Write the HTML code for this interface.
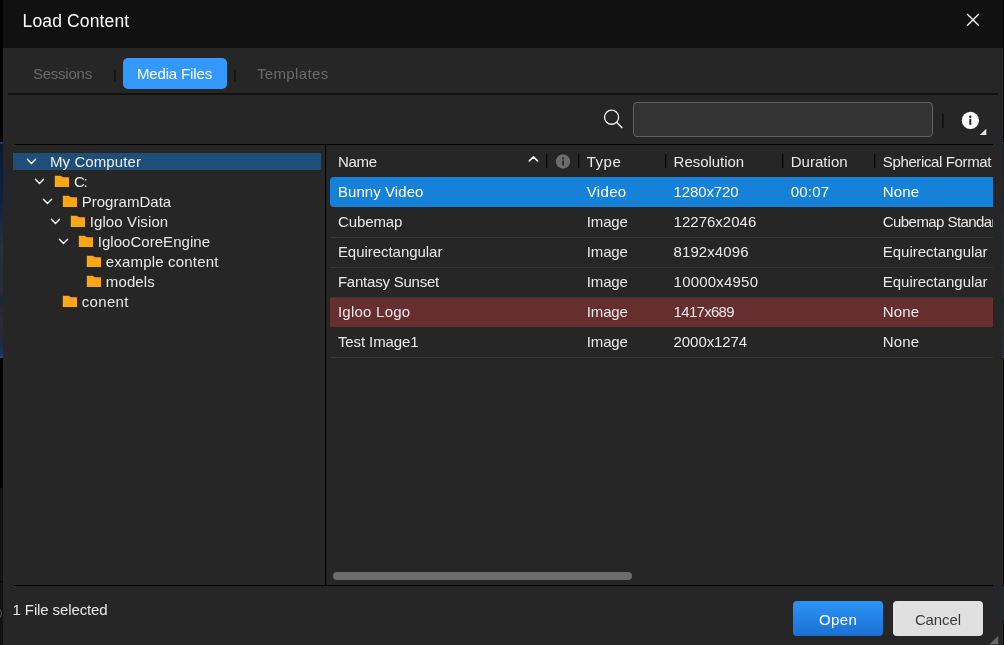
<!DOCTYPE html>
<html><head><meta charset="utf-8"><title>Load Content</title>
<style>
*{box-sizing:border-box;margin:0;padding:0}
html,body{width:1004px;height:645px;overflow:hidden;background:#000;font-family:"Liberation Sans",sans-serif;}
body{position:relative}
.abs{position:absolute}
#bgl1{left:0;top:0;width:3px;height:142px;background:#000}
#bgl2{left:0;top:142px;width:3px;height:216px;background:linear-gradient(#17375c 0,#17375c 2px,#0a1a33 2px,#0d2340 58px,#27333b 108px,#232c3a 133px,#2f2c35 148px,#1a2438 158px,#2f2a33 178px,#1e2a40 203px,#14365c 212px,#1c4a78 215px)}
#bgl3{left:0;top:358px;width:3px;height:130px;background:#000}
#bgl4{left:0;top:488px;width:3px;height:157px;background:#111}
#win{left:3px;top:0;width:1000px;height:645px;background:#262626}
#title{left:3px;top:0;width:1000px;height:48px;background:#111}
.t{color:#e6e6e6;font-size:15px;white-space:nowrap;position:absolute;line-height:normal}
.hl{position:absolute;background:#111;height:2px}
.vl{position:absolute;background:#111;width:2px}
.sep{position:absolute;background:#060606;width:1px;height:14px;top:154px;box-shadow:1px 0 0 rgba(0,0,0,.25)}
.rl{position:absolute;left:330px;width:663px;height:1px;background:#353535}
.ch{position:absolute;width:12px;height:8px;margin-left:-1px;margin-top:-1px}
.fo{position:absolute;width:16px;height:13px;margin-left:-1px;margin-top:-1px}
</style></head><body>
<div class="abs" id="bgl1"></div><div class="abs" id="bgl2"></div><div class="abs" id="bgl3"></div><div class="abs" id="bgl4"></div>
<div class="abs" style="left:1003px;top:0;width:1px;height:142px;background:#000"></div><div class="abs" style="left:1003px;top:142px;width:1px;height:216px;background:linear-gradient(#17375c 0,#17375c 2px,#0a1a33 2px,#0d2340 58px,#27333b 108px,#232c3a 133px,#2f2c35 148px,#1a2438 158px,#2f2a33 178px,#1e2a40 203px,#14365c 212px,#1c4a78 215px)"></div><div class="abs" style="left:1003px;top:358px;width:1px;height:287px;background:#0a0a0a"></div><div class="abs" style="left:1003px;top:587px;width:1px;height:33px;background:#0f2b4a"></div>
<div class="abs" style="left:0;top:581px;width:3px;height:1px;background:#060606"></div><div class="abs" style="left:-8px;top:608px;width:10px;height:11px;border:1px solid #555;border-radius:50%"></div>
<div class="abs" id="win"></div>
<div class="abs" id="title"></div>
<svg class="abs" style="left:965px;top:12px" width="16" height="16" viewBox="0 0 16 16"><path d="M2.1 2L13.9 13.8M13.9 2L2.1 13.8" stroke="#fff" stroke-width="1.3" fill="none"/></svg>

<!-- tabs -->
<div class="vl" style="left:114px;top:69px;height:12px;width:2px;background:#171717"></div>
<div class="abs" style="left:123px;top:58px;width:104px;height:31px;background:#3399ff;border-radius:5px"></div>
<div class="vl" style="left:234px;top:69px;height:12px;width:2px;background:#171717"></div>
<div class="hl" style="left:8px;top:93px;width:990px"></div>

<!-- search -->
<svg class="abs" style="left:600px;top:105px" width="26" height="26" viewBox="0 0 26 26"><circle cx="11.6" cy="12.2" r="7.05" stroke="#f4f4f4" stroke-width="1.3" fill="none"/><path d="M16.6 17.2L22.3 22.9" stroke="#f4f4f4" stroke-width="1.4"/></svg>
<div class="abs" style="left:633px;top:102px;width:300px;height:35px;background:#333;border:1px solid #636363;border-radius:4px"></div>
<div class="vl" style="left:942px;top:114px;height:14px;width:2px;background:#131313"></div>
<svg class="abs" style="left:960px;top:110px" width="28" height="27" viewBox="0 0 28 27"><circle cx="10.4" cy="10.4" r="8.6" fill="#fff"/><rect x="9.3" y="8.8" width="2" height="6" fill="#222"/><circle cx="10.3" cy="6.8" r="1.2" fill="#222"/><path d="M26.3 18.7V25H19.8Z" fill="#e4e4e4"/></svg>
<div class="hl" style="left:14px;top:144px;width:979px;height:1px;background:#000"></div>

<!-- tree -->
<div class="abs" style="left:13px;top:153px;width:308px;height:17px;background:#1f4e79"></div>
<svg class="ch" style="left:27px;top:159px"><path d="M1.4 1.3L5.5 5.4L9.6 1.3" stroke="#fff" stroke-width="1.4" fill="none" stroke-linecap="round" stroke-linejoin="round"/></svg>
<svg class="ch" style="left:35px;top:179px"><path d="M1.4 1.3L5.5 5.4L9.6 1.3" stroke="#fff" stroke-width="1.4" fill="none" stroke-linecap="round" stroke-linejoin="round"/></svg>
<svg class="ch" style="left:43px;top:199px"><path d="M1.4 1.3L5.5 5.4L9.6 1.3" stroke="#fff" stroke-width="1.4" fill="none" stroke-linecap="round" stroke-linejoin="round"/></svg>
<svg class="ch" style="left:51px;top:219px"><path d="M1.4 1.3L5.5 5.4L9.6 1.3" stroke="#fff" stroke-width="1.4" fill="none" stroke-linecap="round" stroke-linejoin="round"/></svg>
<svg class="ch" style="left:59px;top:239px"><path d="M1.4 1.3L5.5 5.4L9.6 1.3" stroke="#fff" stroke-width="1.4" fill="none" stroke-linecap="round" stroke-linejoin="round"/></svg>
<svg class="fo" style="left:55px;top:176px"><path d="M0.8 1.3Q0.8 0.8 1.3 0.8H6.7L8.8 2.3H14.5Q15 2.3 15 2.8V12H0.8Z" fill="#fda616"/></svg>
<svg class="fo" style="left:63px;top:196px"><path d="M0.8 1.3Q0.8 0.8 1.3 0.8H6.7L8.8 2.3H14.5Q15 2.3 15 2.8V12H0.8Z" fill="#fda616"/></svg>
<svg class="fo" style="left:71px;top:216px"><path d="M0.8 1.3Q0.8 0.8 1.3 0.8H6.7L8.8 2.3H14.5Q15 2.3 15 2.8V12H0.8Z" fill="#fda616"/></svg>
<svg class="fo" style="left:79px;top:236px"><path d="M0.8 1.3Q0.8 0.8 1.3 0.8H6.7L8.8 2.3H14.5Q15 2.3 15 2.8V12H0.8Z" fill="#fda616"/></svg>
<svg class="fo" style="left:87px;top:256px"><path d="M0.8 1.3Q0.8 0.8 1.3 0.8H6.7L8.8 2.3H14.5Q15 2.3 15 2.8V12H0.8Z" fill="#fda616"/></svg>
<svg class="fo" style="left:87px;top:276px"><path d="M0.8 1.3Q0.8 0.8 1.3 0.8H6.7L8.8 2.3H14.5Q15 2.3 15 2.8V12H0.8Z" fill="#fda616"/></svg>
<svg class="fo" style="left:63px;top:296px"><path d="M0.8 1.3Q0.8 0.8 1.3 0.8H6.7L8.8 2.3H14.5Q15 2.3 15 2.8V12H0.8Z" fill="#fda616"/></svg>
<div class="vl" style="left:325px;top:145px;height:440px;width:1px;background:#000;box-shadow:1px 0 0 rgba(0,0,0,.2)"></div>

<!-- table -->
<svg class="abs" style="left:528px;top:154px" width="12" height="9"><path d="M1.3 6.9L5.45 2.9L9.6 6.9" stroke="#fff" stroke-width="1.6" fill="none" stroke-linecap="round" stroke-linejoin="round"/></svg>
<div class="sep" style="left:546px"></div>
<svg class="abs" style="left:555px;top:154px" width="16" height="16" viewBox="0 0 16 16"><circle cx="8" cy="7.5" r="7.2" fill="#6c6c6c"/><rect x="7.2" y="6.5" width="1.7" height="5" fill="#262626"/><circle cx="8.05" cy="4.4" r="1.05" fill="#262626"/></svg>
<div class="sep" style="left:578px"></div>
<div class="sep" style="left:665px"></div>
<div class="sep" style="left:782px"></div>
<div class="sep" style="left:874px"></div>
<div class="abs" style="left:330px;top:177px;width:663px;height:30px;background:#1581d8;border-radius:4px 0 0 4px"></div>
<div class="rl" style="top:237px"></div>
<div class="rl" style="top:267px"></div>
<div class="rl" style="top:297px"></div>
<div class="abs" style="left:330px;top:298px;width:663px;height:29px;background:#662e2e"></div>
<div class="rl" style="top:357px"></div>

<!-- scrollbar -->
<div class="abs" style="left:333px;top:572px;width:298.5px;height:8px;border-radius:4px;background:#6c6c6c"></div>
<div class="hl" style="left:14px;top:585px;width:979px;height:1px;background:#000"></div>

<!-- footer -->
<div class="abs" style="left:793px;top:601px;width:90px;height:35px;border-radius:4px;background:linear-gradient(#2c93f6,#1a70d2)"></div>
<div class="abs" style="left:893px;top:601px;width:90px;height:35px;border-radius:4px;background:#e0e0e0"></div>
<svg class="abs" style="left:989px;top:635px" width="10" height="10" viewBox="0 0 10 10"><path d="M9.3 0.7V9.3H0.7Z" fill="#686868"/></svg>
<div id="tx" style="position:absolute;left:0;top:0;width:1004px;height:645px;will-change:transform">
<span class="t" style="left:22.6px;top:11.2px;font-size:17.5px;color:#fff;letter-spacing:0.14px;">Load Content</span>
<span class="t" style="left:32.9px;top:65.4px;font-size:15px;color:#6b6b6b;letter-spacing:-0.23px;">Sessions</span>
<span class="t" style="left:136.9px;top:65.4px;font-size:15px;color:#fff;letter-spacing:-0.14px;">Media Files</span>
<span class="t" style="left:256.9px;top:65.4px;font-size:15px;color:#6b6b6b;letter-spacing:0.37px;">Templates</span>
<span class="t" style="left:50.0px;top:153.4px;font-size:15px;color:#f0f0f0;letter-spacing:0.09px;">My Computer</span>
<span class="t" style="left:73.9px;top:173.4px;font-size:15px;color:#e9e9e9;letter-spacing:-1.20px;">C:</span>
<span class="t" style="left:81.7px;top:193.4px;font-size:15px;color:#e9e9e9;letter-spacing:0.03px;">ProgramData</span>
<span class="t" style="left:89.7px;top:213.4px;font-size:15px;color:#e9e9e9;letter-spacing:0.11px;">Igloo Vision</span>
<span class="t" style="left:97.7px;top:233.4px;font-size:15px;color:#e9e9e9;letter-spacing:0.04px;">IglooCoreEngine</span>
<span class="t" style="left:105.8px;top:253.4px;font-size:15px;color:#e9e9e9;letter-spacing:0.18px;">example content</span>
<span class="t" style="left:105.8px;top:273.4px;font-size:15px;color:#e9e9e9;letter-spacing:0.13px;">models</span>
<span class="t" style="left:81.7px;top:293.4px;font-size:15px;color:#e9e9e9;letter-spacing:0.35px;">conent</span>
<span class="t" style="left:337.9px;top:153.4px;font-size:15px;color:#e9e9e9;letter-spacing:-0.31px;">Name</span>
<span class="t" style="left:586.8px;top:153.4px;font-size:15px;color:#e9e9e9;letter-spacing:0.49px;">Type</span>
<span class="t" style="left:673.6px;top:153.4px;font-size:15px;color:#e9e9e9;letter-spacing:-0.04px;">Resolution</span>
<span class="t" style="left:790.7px;top:153.4px;font-size:15px;color:#e9e9e9;letter-spacing:0.04px;">Duration</span>
<span class="t" style="left:337.9px;top:183.4px;font-size:15px;color:#fff;letter-spacing:0.07px;">Bunny Video</span>
<span class="t" style="left:337.9px;top:213.4px;font-size:15px;color:#e9e9e9;letter-spacing:-0.09px;">Cubemap</span>
<span class="t" style="left:337.9px;top:243.4px;font-size:15px;color:#e9e9e9;letter-spacing:-0.04px;">Equirectangular</span>
<span class="t" style="left:337.9px;top:273.4px;font-size:15px;color:#e9e9e9;letter-spacing:-0.22px;">Fantasy Sunset</span>
<span class="t" style="left:337.9px;top:303.4px;font-size:15px;color:#e9e9e9;letter-spacing:0.25px;">Igloo Logo</span>
<span class="t" style="left:337.9px;top:333.4px;font-size:15px;color:#e9e9e9;letter-spacing:-0.10px;">Test Image1</span>
<span class="t" style="left:586.8px;top:183.4px;font-size:15px;color:#fff;letter-spacing:0.33px;">Video</span>
<span class="t" style="left:586.8px;top:213.4px;font-size:15px;color:#e9e9e9;letter-spacing:-0.15px;">Image</span>
<span class="t" style="left:586.8px;top:243.4px;font-size:15px;color:#e9e9e9;letter-spacing:-0.15px;">Image</span>
<span class="t" style="left:586.8px;top:273.4px;font-size:15px;color:#e9e9e9;letter-spacing:-0.15px;">Image</span>
<span class="t" style="left:586.8px;top:303.4px;font-size:15px;color:#e9e9e9;letter-spacing:-0.15px;">Image</span>
<span class="t" style="left:586.8px;top:333.4px;font-size:15px;color:#e9e9e9;letter-spacing:-0.15px;">Image</span>
<span class="t" style="left:673.6px;top:183.4px;font-size:15px;color:#fff;letter-spacing:-0.12px;">1280x720</span>
<span class="t" style="left:673.6px;top:213.4px;font-size:15px;color:#e9e9e9;letter-spacing:0.01px;">12276x2046</span>
<span class="t" style="left:673.6px;top:243.4px;font-size:15px;color:#e9e9e9;letter-spacing:0.08px;">8192x4096</span>
<span class="t" style="left:673.6px;top:273.4px;font-size:15px;color:#e9e9e9;letter-spacing:0.20px;">10000x4950</span>
<span class="t" style="left:673.6px;top:303.4px;font-size:15px;color:#e9e9e9;letter-spacing:-0.70px;">1417x689</span>
<span class="t" style="left:673.6px;top:333.4px;font-size:15px;color:#e9e9e9;letter-spacing:-0.08px;">2000x1274</span>
<span class="t" style="left:790.7px;top:183.4px;font-size:15px;color:#fff;letter-spacing:0.24px;">00:07</span>
<span class="t" style="left:882.8px;top:183.4px;font-size:15px;color:#fff;letter-spacing:0.18px;">None</span>
<span class="t" style="left:882.8px;top:243.4px;font-size:15px;color:#e9e9e9;letter-spacing:-0.02px;">Equirectangular</span>
<span class="t" style="left:882.8px;top:273.4px;font-size:15px;color:#e9e9e9;letter-spacing:-0.02px;">Equirectangular</span>
<span class="t" style="left:882.8px;top:303.4px;font-size:15px;color:#e9e9e9;letter-spacing:0.18px;">None</span>
<span class="t" style="left:882.8px;top:333.4px;font-size:15px;color:#e9e9e9;letter-spacing:0.18px;">None</span>
<span class="t" style="left:12.6px;top:601.4px;font-size:15px;color:#e9e9e9;letter-spacing:-0.12px;">1 File selected</span>
<span class="t" style="left:818.9px;top:610.8px;font-size:15px;color:#fff;letter-spacing:0.43px;">Open</span>
<span class="t" style="left:914.9px;top:610.8px;font-size:15px;color:#3c3c3c;letter-spacing:-0.12px;">Cancel</span>
<div class="abs" style="left:882.8px;top:151.4px;width:110.2px;height:22px;overflow:hidden"><span class="t" style="left:0;top:2px;color:#e9e9e9;letter-spacing:-0.37px">Spherical Format</span></div>
<div class="abs" style="left:882.8px;top:211.4px;width:110.2px;height:22px;overflow:hidden"><span class="t" style="left:0;top:2px;color:#e9e9e9;letter-spacing:-0.57px">Cubemap Standard</span></div>
</div>
</body></html>
